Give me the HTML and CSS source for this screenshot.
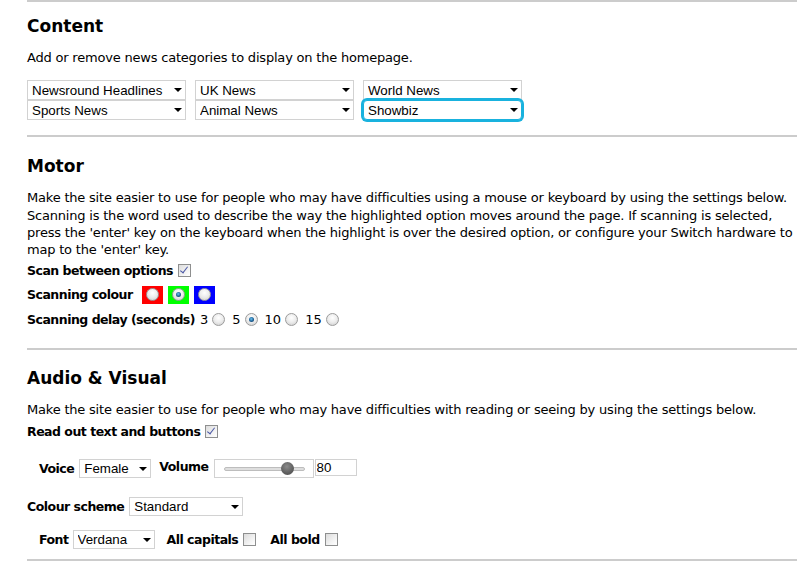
FILE: index.html
```html
<!DOCTYPE html>
<html lang="en">
<head>
<meta charset="utf-8">
<title>Settings</title>
<link rel="stylesheet" href="styles.css">
</head>
<body>
<div class="page">
  <section class="panel panel-content">
    <h2 class="panel-title">Content</h2>
    <p class="panel-desc">Add or remove news categories to display on the homepage.</p>
    <div class="cat-grid">
      <span class="sel sel-cat"><select class="sel-input"><option>Newsround Headlines</option></select></span>
      <span class="sel sel-cat"><select class="sel-input"><option>UK News</option></select></span>
      <span class="sel sel-cat"><select class="sel-input"><option>World News</option></select></span>
      <span class="sel sel-cat"><select class="sel-input"><option>Sports News</option></select></span>
      <span class="sel sel-cat"><select class="sel-input"><option>Animal News</option></select></span>
      <span class="sel sel-cat"><select class="sel-input is-focused"><option>Showbiz</option></select></span>
    </div>
  </section>

  <section class="panel panel-motor">
    <h2 class="panel-title">Motor</h2>
    <p class="panel-desc">Make the site easier to use for people who may have difficulties using a mouse or keyboard by using the settings below.<br>Scanning is the word used to describe the way the highlighted option moves around the page. If scanning is selected,<br>press the 'enter' key on the keyboard when the highlight is over the desired option, or configure your Switch hardware to<br>map to the 'enter' key.</p>
    <div class="opt-row">
      <span class="opt-label">Scan between options</span>
      <input type="checkbox" class="chk" checked>
    </div>
    <div class="opt-row">
      <span class="opt-label">Scanning colour</span>
      <span class="swatches">
        <span class="swatch swatch-red"><input type="radio" name="scol" class="rad"></span>
        <span class="swatch swatch-green"><input type="radio" name="scol" class="rad" checked></span>
        <span class="swatch swatch-blue"><input type="radio" name="scol" class="rad"></span>
      </span>
    </div>
    <div class="opt-row opt-row-delay">
      <span class="opt-label">Scanning delay (seconds)</span>
      <span class="delay-list">
        <span class="delay-opt">3<input type="radio" name="sdel" class="rad"></span>
        <span class="delay-opt">5<input type="radio" name="sdel" class="rad" checked></span>
        <span class="delay-opt">10<input type="radio" name="sdel" class="rad"></span>
        <span class="delay-opt">15<input type="radio" name="sdel" class="rad"></span>
      </span>
    </div>
  </section>

  <section class="panel panel-audio">
    <h2 class="panel-title">Audio &amp; Visual</h2>
    <p class="panel-desc">Make the site easier to use for people who may have difficulties with reading or seeing by using the settings below.</p>
    <div class="opt-row opt-row-read">
      <span class="opt-label">Read out text and buttons</span>
      <input type="checkbox" class="chk" checked>
    </div>
    <div class="opt-row opt-row-voice">
      <span class="opt-label">Voice</span>
      <span class="sel sel-voice"><select class="sel-input"><option>Female</option></select></span>
      <span class="opt-label vol-label">Volume</span>
      <span class="vol-ctrl">
        <input type="range" class="vol-slider" min="6" max="93" value="80">
        <input type="text" class="vol-num" value="80">
      </span>
    </div>
    <div class="opt-row opt-row-scheme">
      <span class="opt-label">Colour scheme</span>
      <span class="sel sel-scheme"><select class="sel-input"><option>Standard</option></select></span>
    </div>
    <div class="opt-row opt-row-font">
      <span class="opt-label">Font</span>
      <span class="sel sel-font"><select class="sel-input"><option>Verdana</option></select></span>
      <span class="opt-label caps-label">All capitals</span>
      <input type="checkbox" class="chk">
      <span class="opt-label bold-label">All bold</span>
      <input type="checkbox" class="chk">
    </div>
  </section>
</div>
</body>
</html>
```

FILE: styles.css
```css
body {
  margin: 0;
  background: #ffffff;
  color: #000000;
  font-family: Verdana, "DejaVu Sans", sans-serif;
  font-size: 13px;
}

.page {
  width: 770px;
  padding-left: 27px;
}

.panel {
  border-top: 2px solid #cccccc;
}

.panel-content { padding: 14px 0 15px; }
.panel-motor { padding: 19px 0 16px; }
.panel-audio {
  padding: 18px 0 7px;
  border-bottom: 2px solid #cccccc;
}

.panel-title {
  margin: 0;
  font-size: 17px;
  line-height: 20px;
  font-weight: bold;
}

.panel-desc {
  margin: 13px 0 0;
  line-height: 17.33px;
  letter-spacing: -0.2px;
  white-space: nowrap;
}

/* selects */
.cat-grid {
  display: grid;
  grid-template-columns: repeat(3, 159px);
  column-gap: 9px;
  margin-top: 14px;
}

.sel {
  position: relative;
  display: inline-block;
  flex: none;
}

.sel-cat { display: block; width: 159px; height: 20px; }
.sel-voice { width: 72px; height: 19px; margin-left: 5px; }
.sel-scheme { width: 114px; height: 19px; margin-left: 5px; }
.sel-font { width: 82px; height: 19px; margin-left: 4px; }

.sel-input {
  -webkit-appearance: none;
  appearance: none;
  display: block;
  width: 100%;
  height: 100%;
  box-sizing: border-box;
  margin: 0;
  padding: 0 0 0 4px;
  border: 1px solid #d2d2d2;
  border-radius: 0;
  background: #ffffff;
  color: #000000;
  font-family: Arial, "Liberation Sans", sans-serif;
  font-size: 13.33px;
  outline: none;
}

.sel-input.is-focused {
  border-color: #19b2de;
  border-radius: 4px;
  box-shadow: 0 0 0 2px #19b2de;
}

.sel::after {
  content: "";
  position: absolute;
  right: 4px;
  top: 50%;
  margin-top: -2px;
  border-left: 4px solid transparent;
  border-right: 4px solid transparent;
  border-top: 4px solid #000000;
  pointer-events: none;
}

/* option rows */
.opt-row {
  display: flex;
  align-items: center;
  height: 24px;
}

.opt-label {
  font-weight: bold;
  font-size: 12.5px;
  letter-spacing: -0.5px;
  white-space: nowrap;
}

.opt-row-delay { margin-top: 1px; }
.opt-row-read { margin-top: 2px; }
.opt-row-voice { margin-top: 13px; padding-left: 12px; }
.opt-row-scheme { margin-top: 14px; }
.opt-row-font { margin-top: 9px; padding-left: 12px; }

/* checkbox */
.chk {
  -webkit-appearance: none;
  appearance: none;
  position: relative;
  flex: none;
  width: 13px;
  height: 13px;
  margin: 0 0 0 5px;
  box-sizing: border-box;
  border: 1px solid #8e8f8f;
  background: linear-gradient(135deg, #dcdcdc 0%, #f6f6f6 70%, #ffffff 100%);
}

.chk:checked::after {
  content: "";
  position: absolute;
  left: 3px;
  top: 0px;
  width: 3px;
  height: 7px;
  border: solid #4b58a6;
  border-width: 0 1.6px 1.6px 0;
  transform: rotate(38deg);
}

/* radio */
.rad {
  -webkit-appearance: none;
  appearance: none;
  position: relative;
  flex: none;
  width: 13px;
  height: 13px;
  margin: 0;
  box-sizing: border-box;
  border: 1px solid #9c9c9c;
  border-radius: 50%;
  background: radial-gradient(circle at 50% 35%, #ffffff 0%, #ececec 50%, #c9c9c9 100%);
}

.rad:checked::after {
  content: "";
  position: absolute;
  left: 3px;
  top: 3px;
  width: 5px;
  height: 5px;
  border-radius: 50%;
  background: radial-gradient(circle at 45% 40%, #6cc4f2 0%, #1c5f95 55%, #0e2c4c 100%);
}

/* colour swatches */
.swatches {
  display: flex;
  gap: 5px;
  margin-left: 9px;
}

.swatch {
  display: flex;
  align-items: center;
  justify-content: center;
  width: 21px;
  height: 18px;
}

.swatch-red { background: #ff0000; }
.swatch-green { background: #00ff00; }
.swatch-blue { background: #0000ff; }

/* delay */
.delay-list {
  display: flex;
  gap: 7px;
  margin-left: 5px;
}

.delay-opt {
  display: inline-flex;
  align-items: center;
  gap: 4px;
}

/* volume */
.vol-label {
  margin-left: 8px;
  margin-bottom: 4px;
}

.vol-ctrl {
  display: flex;
  align-items: flex-start;
  margin-left: 5px;
}

.vol-slider {
  -webkit-appearance: none;
  appearance: none;
  width: 100px;
  height: 19px;
  margin: 0;
  padding: 0 8px 0 9px;
  box-sizing: border-box;
  border: 1px solid #d2d2d2;
  background: #ffffff;
}

.vol-slider::-webkit-slider-runnable-track {
  height: 4px;
  box-sizing: border-box;
  border: 1px solid #bdbdbd;
  border-radius: 2px;
  background: #dedede;
}

.vol-slider::-webkit-slider-thumb {
  -webkit-appearance: none;
  appearance: none;
  width: 13px;
  height: 13px;
  margin-top: -5.5px;
  border-radius: 50%;
  background: radial-gradient(circle at 45% 35%, #8c8c8c 0%, #5e5e5e 60%, #4a4a4a 100%);
}

.vol-num {
  width: 42px;
  height: 17px;
  box-sizing: border-box;
  margin: 0 0 0 1px;
  padding: 0 0 0 1px;
  border: 1px solid #d2d2d2;
  font-family: Arial, "Liberation Sans", sans-serif;
  font-size: 13.33px;
  color: #000000;
}

.caps-label { margin-left: 12px; }
.bold-label { margin-left: 14px; }
```
